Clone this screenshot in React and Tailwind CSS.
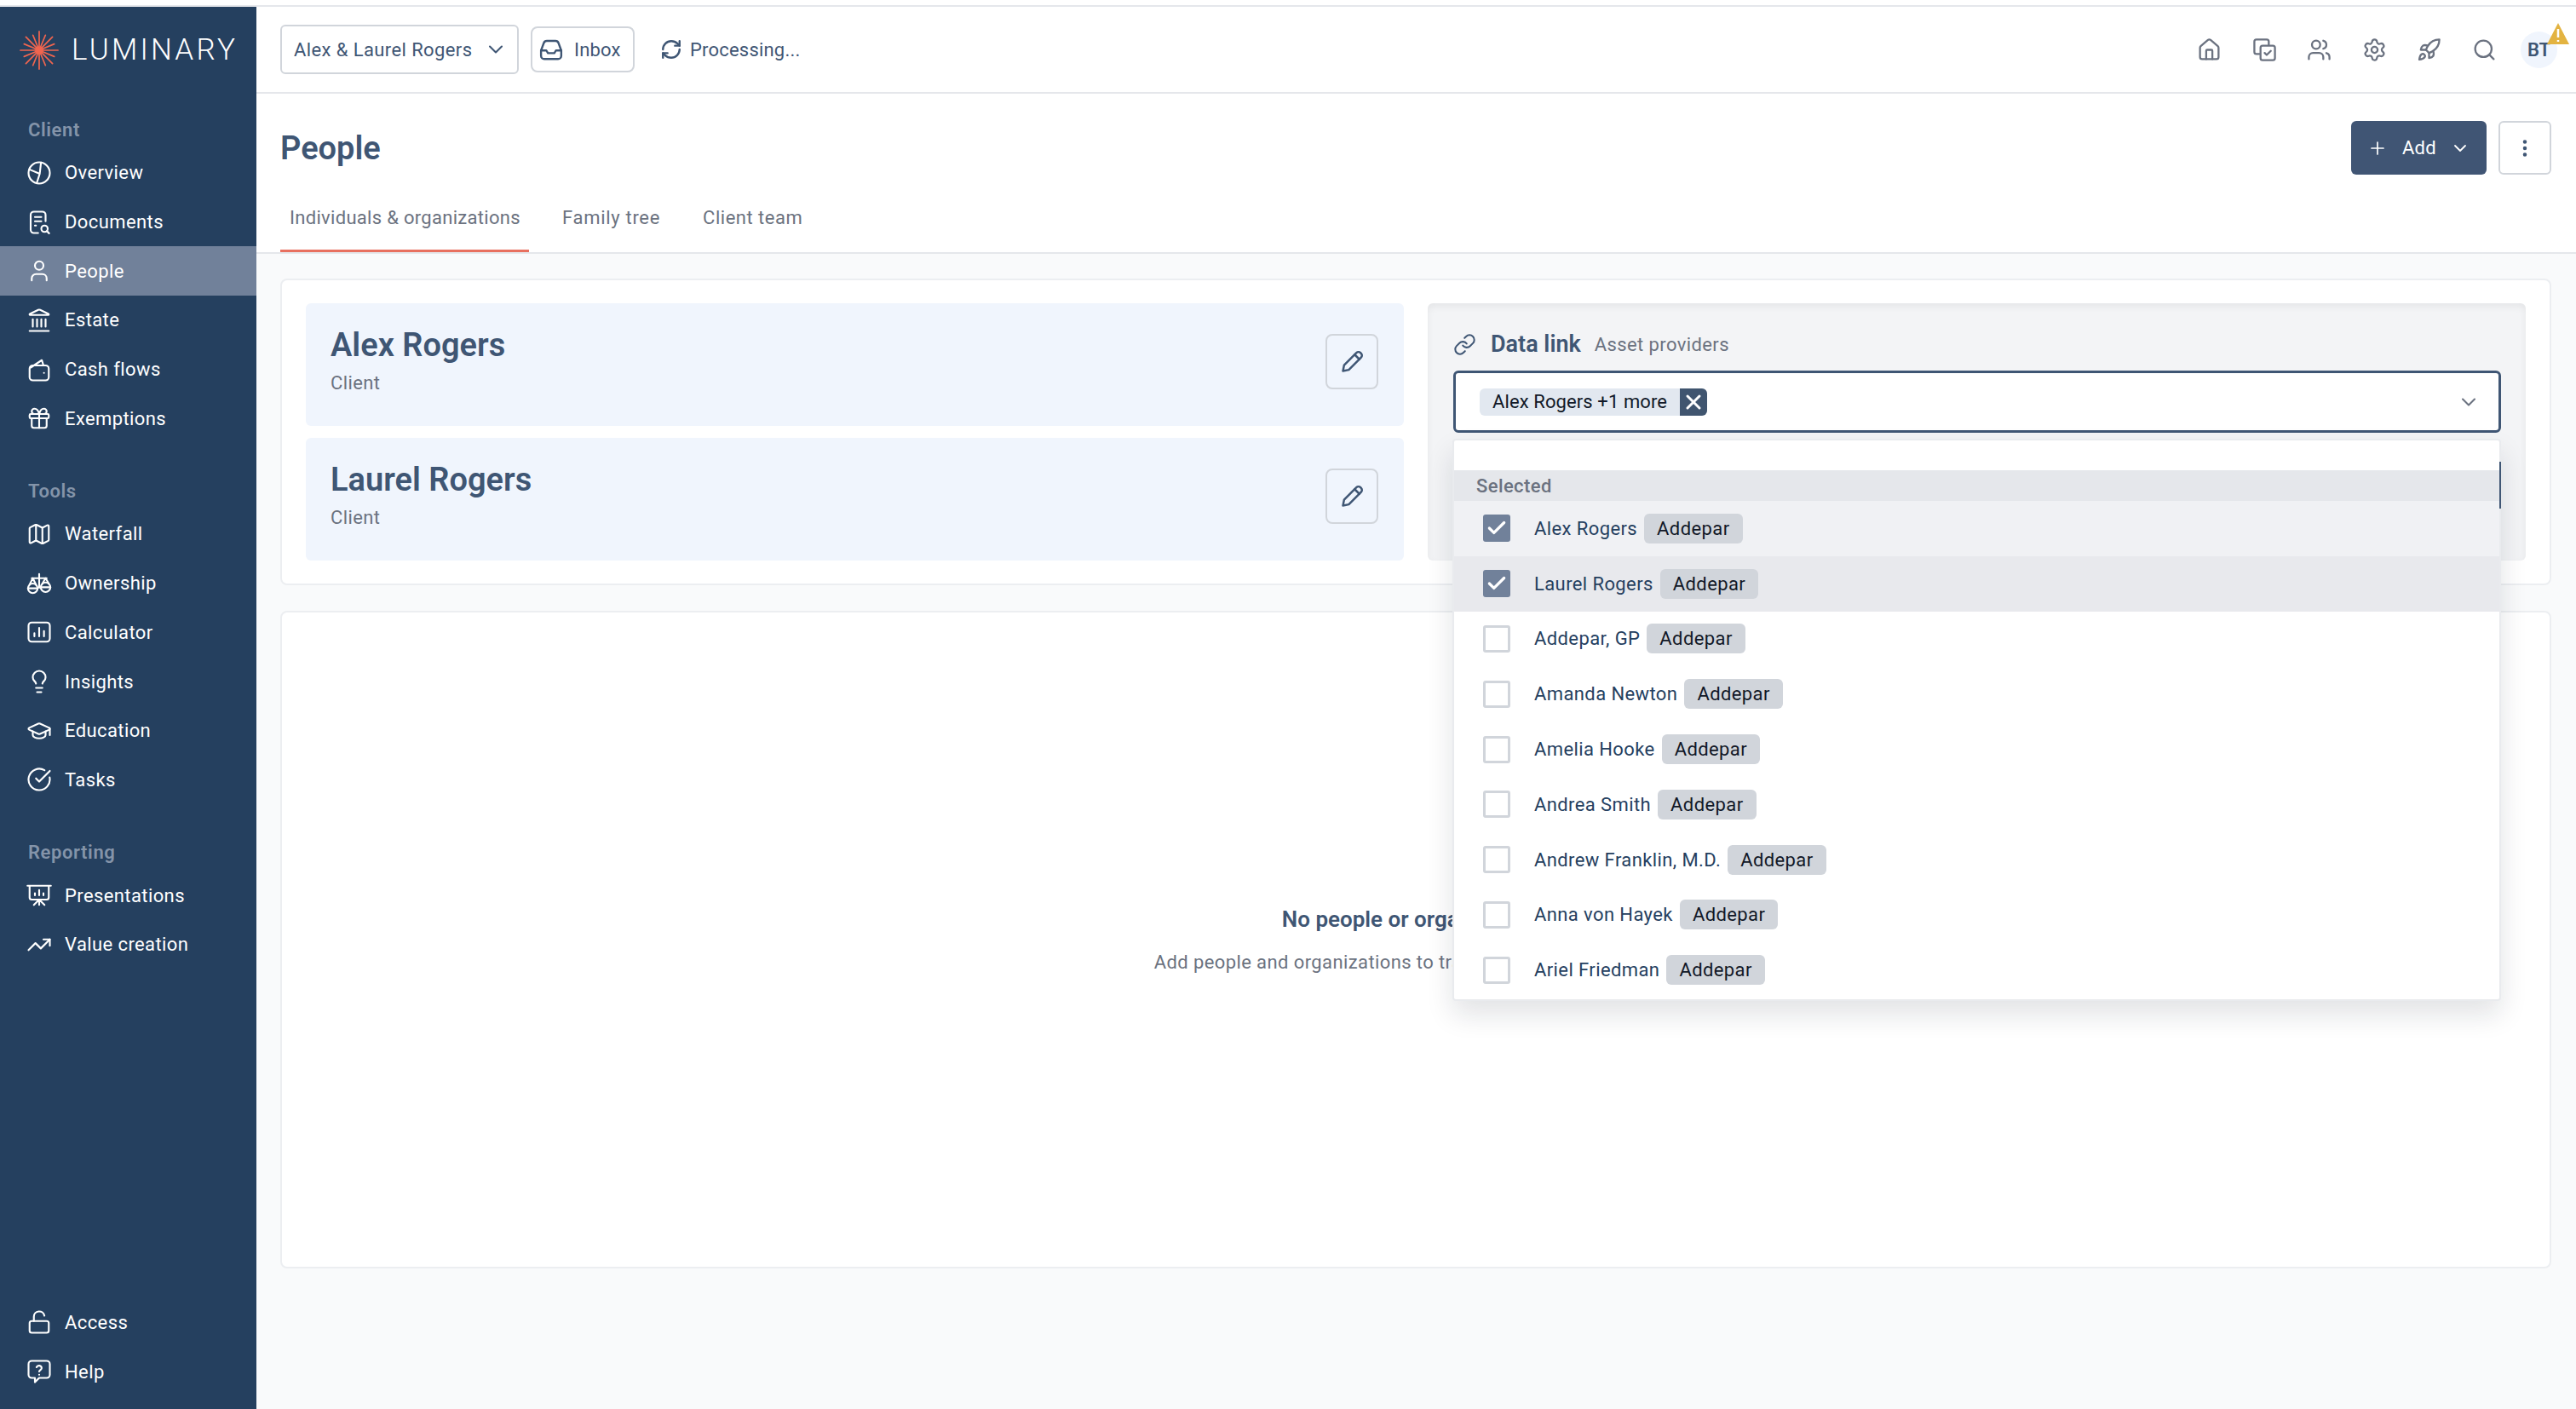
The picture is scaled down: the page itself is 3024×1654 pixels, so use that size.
import React from 'react';
import {
  User, Landmark, Gift, Map, Lightbulb, GraduationCap, CircleCheckBig,
  TrendingUp, LockOpen, House, Users, Settings, Rocket, Search, ChevronDown, Plus, EllipsisVertical,
  RefreshCw, Link, X, Check,
} from 'lucide-react';

const Icon = ({ children, ...props }) => (
  <svg viewBox="0 0 24 24" fill="none" stroke="currentColor" strokeLinecap="round" strokeLinejoin="round" {...props}>
    {children}
  </svg>
);

const Overview = (props) => (
  <Icon {...props}>
    <circle cx="12" cy="12" r="10" />
    <path d="M13.7 2.3 12.5 12.8 9.8 21.2M2.8 8.7l9.7 4.1" />
  </Icon>
);

const Documents = (props) => (
  <Icon {...props}>
    <path d="M11 22H7a3 3 0 0 1-3-3V5a3 3 0 0 1 3-3h8a3 3 0 0 1 3 3v6" />
    <path d="M8 7h6M8 11h6M8 15h1" />
    <circle cx="17" cy="18" r="3" />
    <path d="m19.3 20.3 2 2" />
  </Icon>
);

const WalletIcon = (props) => (
  <Icon {...props}>
    <rect x="3" y="8" width="18" height="14" rx="3" />
    <path d="M4 10 14.5 3 16 8" />
    <path d="M16.5 15h.01" />
  </Icon>
);

const Scales = (props) => (
  <Icon {...props}>
    <path d="M12 3v13M5 7h14" />
    <circle cx="6" cy="16.5" r="4.5" />
    <circle cx="18" cy="15.5" r="4.5" />
    <path d="M1.5 16.5h9M13.5 15.5h9M6 7l-3 6M6 7l3 6M18 7l-3 5M18 7l3 5" />
  </Icon>
);

const ChartBox = (props) => (
  <Icon {...props}>
    <rect x="2" y="3" width="20" height="18" rx="3" />
    <path d="M7.5 16v-3M12 16V8M16.5 16v-5" />
  </Icon>
);

const Board = (props) => (
  <Icon {...props}>
    <path d="M1 3h22M3 3v11a2 2 0 0 0 2 2h14a2 2 0 0 0 2-2V3" />
    <path d="M8 12v-2M12 12V7M16 12v-2M12 16v5M12 16l-5 5M12 16l5 5" />
  </Icon>
);

const HelpBubble = (props) => (
  <Icon {...props}>
    <path d="M5 2h14a3 3 0 0 1 3 3v10a3 3 0 0 1-3 3h-7l-4 4v-4H5a3 3 0 0 1-3-3V5a3 3 0 0 1 3-3Z" />
    <path d="M9.5 8a2.5 2.5 0 0 1 4.8.8c0 1.6-2.3 2-2.3 3.2M12 15h.01" />
  </Icon>
);

const CopyCheck = (props) => (
  <Icon {...props}>
    <path d="M7 16H4a2 2 0 0 1-2-2V4a2 2 0 0 1 2-2h10a2 2 0 0 1 2 2v3" />
    <rect x="8" y="8" width="14" height="14" rx="2" />
    <path d="m12 15 2 2 4-4" />
  </Icon>
);

const InboxTray = (props) => (
  <Icon {...props}>
    <path d="M2.5 13v5a3 3 0 0 0 3 3h13a3 3 0 0 0 3-3v-5l-2.6-7a3 3 0 0 0-2.8-2H7.9a3 3 0 0 0-2.8 2Z" />
    <path d="M2.5 13h5l1.5 2.5h6l1.5-2.5h5" />
  </Icon>
);

const PencilIcon = (props) => (
  <Icon {...props}>
    <path d="M4 20l1-5L15.5 4.5a2.5 2.5 0 0 1 3.5 0l.5.5a2.5 2.5 0 0 1 0 3.5L9 19Z" />
    <path d="M14 6l4 4" />
  </Icon>
);

const Logo = () => (
  <svg viewBox="-24 -24 48 48" className="w-[46px] h-[46px]" stroke="#f0654f" strokeWidth="1.8" strokeLinecap="round">
    <circle cx="0" cy="0" r="5" fill="#f0654f" stroke="none" />
    {Array.from({ length: 16 }).map((_, i) => (
      <line key={i} x1="0" y1="-4" x2="0" y2={i % 2 ? -20 : -23} transform={`rotate(${i * 22.5})`} />
    ))}
  </svg>
);

const navGroups = [
  { label: 'Client', items: [[Overview, 'Overview'], [Documents, 'Documents'], [User, 'People'], [Landmark, 'Estate'], [WalletIcon, 'Cash flows'], [Gift, 'Exemptions']] },
  { label: 'Tools', items: [[Map, 'Waterfall'], [Scales, 'Ownership'], [ChartBox, 'Calculator'], [Lightbulb, 'Insights'], [GraduationCap, 'Education'], [CircleCheckBig, 'Tasks']] },
  { label: 'Reporting', items: [[Board, 'Presentations'], [TrendingUp, 'Value creation']] },
];

const NavItem = ({ icon: NavIcon, name }) => (
  <div className={`h-[57.7px] flex items-center pl-[31px] gap-[15px] tracking-[0.4px] text-white ${name === 'People' ? 'bg-[#71819a]' : ''}`}>
    <NavIcon className="w-[30px] h-[30px]" strokeWidth={1.7} />
    <span>{name}</span>
  </div>
);

const people = [
  'Alex Rogers', 'Laurel Rogers', 'Addepar, GP', 'Amanda Newton', 'Amelia Hooke',
  'Andrea Smith', 'Andrew Franklin, M.D.', 'Anna von Hayek', 'Ariel Friedman',
];

const PersonCard = ({ name }) => (
  <div className="h-[144px] rounded-md bg-[#f0f5fd] pl-[29px] pr-[30px] flex items-center justify-between">
    <div className="-mt-[9px]">
      <div className="text-[38px] leading-[44px] tracking-normal font-semibold text-[#3f5674]">{name}</div>
      <div className="leading-[28px] mt-[9px] text-[#6b7280]">Client</div>
    </div>
    <button className="w-[62px] h-[65px] -mt-[8px] border-2 border-[#d1d5db] rounded-lg flex items-center justify-center text-[#3f5674]">
      <PencilIcon className="w-[33px] h-[33px]" strokeWidth={1.8} />
    </button>
  </div>
);

const App = () => {
  return (
    <div className="w-[3024px] h-[1654px] bg-white flex flex-col overflow-hidden text-[22px] tracking-[0.4px]" style={{ fontFamily: '"Roboto", "Liberation Sans", sans-serif' }}>
      <div className="h-[8px] shrink-0 bg-white border-b-2 border-[#e5e7eb]"></div>
      <div className="flex flex-1 min-h-0">
        <aside className="w-[301px] shrink-0 bg-[#25405f] flex flex-col">
          <div className="h-[102px] pl-[23px] flex items-center gap-[15px] shrink-0">
            <Logo />
            <span className="text-[35px] font-light tracking-[3.2px] text-white">LUMINARY</span>
          </div>
          <div className="pt-[28px]">
            {navGroups.map((group) => (
              <div key={group.label} className="mb-[42px]">
                <div className="pl-[33px] h-[30px] leading-[30px] mb-[6px] tracking-[0.6px] font-semibold text-[#8494a9]">{group.label}</div>
                {group.items.map(([icon, name]) => <NavItem key={name} icon={icon} name={name} />)}
              </div>
            ))}
          </div>
          <div className="mt-auto pb-[15px]">
            <NavItem icon={LockOpen} name="Access" />
            <NavItem icon={HelpBubble} name="Help" />
          </div>
        </aside>

        <main className="flex-1 min-w-0 bg-[#f9fafb] flex flex-col">
          <header className="h-[102px] shrink-0 bg-white border-b-2 border-[#e5e7eb] flex items-center pl-[28px] pr-[22px]">
            <button className="w-[280px] h-[58px] border-2 border-[#d1d5db] rounded-md flex items-center justify-between pl-[14px] pr-[11px] text-[#3f5674]">
              <span>Alex &amp; Laurel Rogers</span>
              <ChevronDown className="w-[28px] h-[28px]" strokeWidth={1.8} />
            </button>
            <button className="ml-[14px] w-[122px] h-[54px] border-2 border-[#d1d5db] rounded-lg flex items-center gap-[12px] pl-[7px] tracking-[0.2px] text-[#3f5674]">
              <InboxTray className="w-[30px] h-[30px]" strokeWidth={1.9} />
              <span>Inbox</span>
            </button>
            <div className="ml-[30px] flex items-center gap-[9px] tracking-[0.2px] text-[#3f5674]">
              <RefreshCw className="w-[26px] h-[26px]" strokeWidth={2.2} />
              <span>Processing...</span>
            </div>
            <div className="ml-auto flex items-center gap-[35.6px] text-[#6b7280]">
              <House className="w-[29px] h-[29px]" strokeWidth={1.9} />
              <CopyCheck className="w-[29px] h-[29px]" strokeWidth={1.9} />
              <Users className="w-[29px] h-[29px]" strokeWidth={1.9} />
              <Settings className="w-[29px] h-[29px]" strokeWidth={1.9} />
              <Rocket className="w-[29px] h-[29px]" strokeWidth={1.9} />
              <Search className="w-[29px] h-[29px]" strokeWidth={1.9} />
              <div className="relative -ml-[7.6px] w-[43px] h-[43px] rounded-full bg-[#f0f5fd] flex items-center justify-center font-semibold tracking-normal text-[#3f5674]">
                BT
                <svg viewBox="0 0 26 25" className="absolute -top-[10px] -right-[14px] w-[26px] h-[25px]">
                  <path d="M13 0 26 25H0Z" fill="#e3b341" />
                  <path d="M13 7v10M13 20v2" stroke="#fff" strokeWidth="2.5" />
                </svg>
              </div>
            </div>
          </header>

          <section className="h-[188px] shrink-0 bg-white border-b-2 border-[#e5e7eb] pl-[28px] pr-[29px] flex flex-col">
            <div className="flex items-center justify-between pt-[32px]">
              <h1 className="text-[38px] leading-[64px] tracking-normal font-semibold text-[#3f5674]">People</h1>
              <div className="flex gap-[14px] -mt-[1px]">
                <button className="w-[159px] h-[63px] bg-[#405574] rounded-md text-white flex items-center pl-[19px]">
                  <Plus className="w-[24px] h-[24px]" strokeWidth={1.7} />
                  <span className="ml-[17px] mr-[16px] tracking-[0.2px]">Add</span>
                  <ChevronDown className="w-[24px] h-[24px]" strokeWidth={1.8} />
                </button>
                <button className="w-[62px] h-[63px] border-2 border-[#d1d5db] rounded-md flex items-center justify-center text-[#3f5674]">
                  <EllipsisVertical className="w-[26px] h-[26px]" strokeWidth={2.2} />
                </button>
              </div>
            </div>
            <div className="mt-auto flex leading-[28px] text-[#6b7280]">
              <div className="h-[60px] w-[292px] -mb-[3px] border-b-[3px] border-[#e8705f] pl-[11px] pt-[6px] tracking-[0.3px] whitespace-nowrap">Individuals &amp; organizations</div>
              <div className="h-[60px] pt-[6px] ml-[39px] tracking-[0.7px]">Family tree</div>
              <div className="h-[60px] pt-[6px] ml-[50px] tracking-[0.5px]">Client team</div>
            </div>
          </section>

          <div className="flex-1 min-h-0 pt-[29px] pl-[28px] pr-[29px] flex flex-col gap-[30px]">
            <div className="h-[360px] shrink-0 bg-white border-2 border-[#eceef1] rounded-lg pt-[27px] px-[28px] grid grid-cols-2 gap-[28px]">
              <div className="flex flex-col gap-[14px]">
                <PersonCard name="Alex Rogers" />
                <PersonCard name="Laurel Rogers" />
              </div>
              <div className="relative h-[302px] rounded-md bg-[#f3f4f6] shadow-[inset_0_4px_8px_rgba(0,0,0,0.06)] pl-[30px] pr-[29px] pt-[30px]">
                <div className="flex items-center h-[36px]">
                  <Link className="w-[27px] h-[27px] text-[#3f5674]" strokeWidth={1.8} />
                  <span className="ml-[17px] text-[27px] tracking-normal font-semibold text-[#3f5674]">Data link</span>
                  <span className="ml-[16px] text-[#6b7280]">Asset providers</span>
                </div>
                <div className="mt-[13px] h-[73px] bg-white border-[3px] border-[#3f5674] rounded-md flex items-center justify-between pl-[28px] pr-[21px]">
                  <div className="h-[32px] rounded-md bg-[#e2e8f0] flex items-center overflow-hidden">
                    <span className="pl-[15px] pr-[15px] tracking-[0.1px] text-[#111827]">Alex Rogers +1 more</span>
                    <span className="w-[32px] h-[32px] bg-[#40556f] text-white flex items-center justify-center">
                      <X className="w-[28px] h-[28px]" strokeWidth={2.6} />
                    </span>
                  </div>
                  <ChevronDown className="w-[28px] h-[28px] text-[#6b7280]" strokeWidth={1.8} />
                </div>

                <div className="absolute z-10 left-[29px] right-[29px] top-[159px] h-[660px] bg-white border-2 border-[#e9ebee] rounded-sm shadow-[0_16px_32px_rgba(17,24,39,0.12)]">
                  <div className="absolute -right-[2px] top-[25px] w-[2px] h-[55px] bg-[#3f5674]"></div>
                  <div className="mt-[35px] h-[36px] bg-[#e5e7eb] pl-[26px] flex items-center font-medium text-[#6b7280]">Selected</div>
                  {people.map((name, i) => (
                    <div key={name} className={`h-[64.8px] flex items-center pl-[34px] ${i === 0 ? 'bg-[#f0f1f4]' : i === 1 ? 'bg-[#e8e9ed]' : ''}`}>
                      {i < 2 ? (
                        <span className="w-[32px] h-[32px] rounded-[3px] bg-[#71819a] text-white flex items-center justify-center">
                          <Check className="w-[26px] h-[26px]" strokeWidth={3} />
                        </span>
                      ) : (
                        <span className="w-[32px] h-[32px] rounded-[3px] border-[3px] border-[#d1d5db] bg-white"></span>
                      )}
                      <span className="ml-[28px] text-[#25405f]">{name}</span>
                      <span className="ml-[8px] h-[35px] px-[15px] rounded-md bg-[#d1d5db] text-[#111827] flex items-center">Addepar</span>
                    </div>
                  ))}
                </div>
              </div>
            </div>

            <div className="h-[772px] shrink-0 bg-white border-2 border-[#eceef1] rounded-lg flex flex-col items-center justify-center">
              <div className="text-[26px] tracking-normal font-semibold text-[#3f5674]">No people or organizations</div>
              <div className="mt-[14px] text-[#6b7280]">Add people and organizations to track their assets and plans</div>
            </div>
          </div>
        </main>
      </div>
    </div>
  );
};

export default App;
